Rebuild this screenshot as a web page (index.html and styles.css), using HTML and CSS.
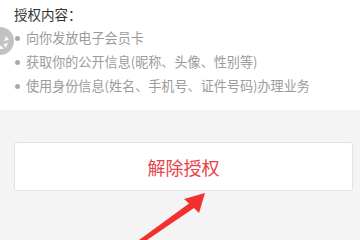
FILE: index.html
```html
<!DOCTYPE html>
<html lang="zh-CN">
<head>
<meta charset="utf-8">
<link rel="stylesheet" href="styles.css">
</head>
<body>
<div class="page">
  <section class="auth">
    <div class="auth-title">授权内容：</div>
    <ul class="auth-list">
      <li>向你发放电子会员卡</li>
      <li>获取你的公开信息(昵称、头像、性别等)</li>
      <li>使用身份信息(姓名、手机号、证件号码)办理业务</li>
    </ul>
  </section>
  <div class="actions">
    <div class="btn-revoke">解除授权</div>
  </div>
  <div class="avatar">
    <svg width="28" height="28" viewBox="0 0 28 28">
      <circle cx="14" cy="14" r="14" fill="#c2c2c2"/>
      <g fill="#fff" opacity="0.9">
        <path d="M20 9 l3 4 l-5 1 z"/>
        <path d="M22 16 l-2 5 l-3 -4 z"/>
        <path d="M18 22 l-6 0 l3 -4 z"/>
      </g>
    </svg>
  </div>
  <svg class="arrow" width="360" height="240" viewBox="0 0 360 240">
    <polygon fill="#f2302f" points="205,193 184,199 189,203.5 139,240 147,240 194,208 199,213"/>
  </svg>
</div>
</body>
</html>
```
FILE: styles.css
```css
html, body {
  margin: 0;
  padding: 0;
}
body {
  background: #f4f4f4;
  font-family: "Noto Sans CJK SC", "Noto Sans", sans-serif;
  width: 360px;
  height: 240px;
  overflow: hidden;
}
.page {
  position: relative;
  width: 360px;
  height: 240px;
}
.auth {
  background: #fff;
  height: 110px;
  box-sizing: border-box;
  padding: 2px 0 0 14px;
}
.auth-title {
  font-size: 13.5px;
  line-height: 24px;
  color: #333;
}
.auth-list {
  list-style: none;
  margin: 0;
  padding: 0;
}
.auth-list li {
  position: relative;
  font-size: 13.1px;
  line-height: 24px;
  color: #9b9b9b;
  padding-left: 12px;
  white-space: nowrap;
}
.auth-list li::before {
  content: "";
  position: absolute;
  left: 1px;
  top: 10px;
  width: 5px;
  height: 5px;
  border-radius: 50%;
  background: #a8a8a8;
}
.actions {
  padding: 32px 0 0 14px;
}
.btn-revoke {
  width: 339px;
  height: 49px;
  box-sizing: border-box;
  background: #fff;
  border: 1px solid #e3e3e3;
  border-radius: 3px;
  display: flex;
  align-items: center;
  justify-content: center;
  font-size: 18px;
  color: #e8424a;
}
.avatar {
  position: absolute;
  left: -14px;
  top: 27px;
  width: 28px;
  height: 28px;
}
.avatar svg {
  display: block;
}
.arrow {
  position: absolute;
  left: 0;
  top: 0;
  pointer-events: none;
}
```
